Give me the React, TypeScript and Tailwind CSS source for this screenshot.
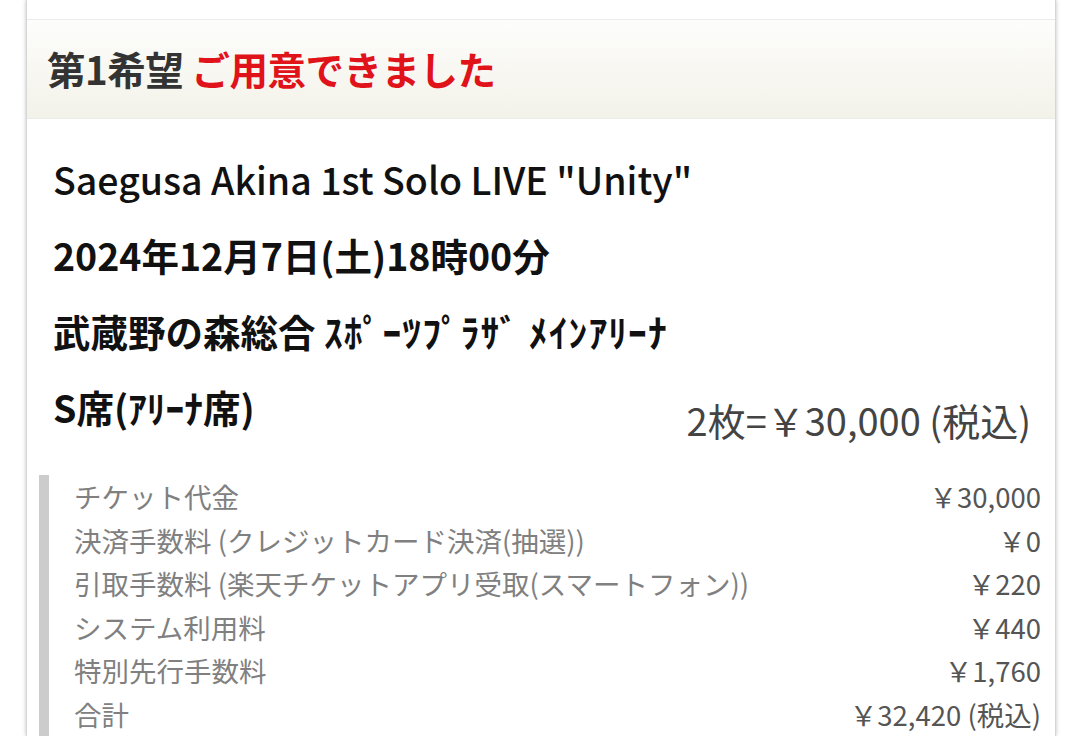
const fees = [
  { label: 'チケット代金', value: '￥30,000' },
  { label: '決済手数料 (クレジットカード決済(抽選))', value: '￥0' },
  { label: '引取手数料 (楽天チケットアプリ受取(スマートフォン))', value: '￥220' },
  { label: 'システム利用料', value: '￥440' },
  { label: '特別先行手数料', value: '￥1,760' },
  { label: '合計', value: '￥32,420 (税込)' },
];

export default function App() {
  return (
    <div
      className="h-[736px] overflow-hidden bg-white"
      style={{ fontFamily: '"Noto Sans CJK JP", "Noto Sans", sans-serif' }}
    >
      <div className="ml-[26px] w-[1030px] h-full bg-white border-x border-[#d6d6d6] shadow-[0_0_4px_rgba(0,0,0,0.25)]">
        <div className="h-[19px]" />
        {/* status header */}
        <div className="h-[100px] flex items-center pl-[20px] border-y border-[#ebebeb] bg-gradient-to-b from-[#fdfdfc] to-[#f3f2e9]">
          <h2 className="text-[38.5px] font-bold text-[#333] tracking-[-0.5px]">
            第1希望 <span className="text-[#e0121a]">ご用意できました</span>
          </h2>
        </div>

        {/* performance info */}
        <div className="pt-[22px] pl-[26px] pr-[24px] text-[#111] text-[37.5px] leading-[76px]">
          <p className="font-medium">Saegusa Akina 1st Solo LIVE "Unity"</p>
          <p className="font-bold">2024年12月7日(土)18時00分</p>
          <p className="font-bold">
            武蔵野の森総合 <span className="tracking-[1.1px]">ｽﾎﾟｰﾂﾌﾟﾗｻﾞ ﾒｲﾝｱﾘｰﾅ</span>
          </p>
          <div className="flex justify-between">
            <p className="font-bold">S席(ｱﾘｰﾅ席)</p>
            <p className="mt-[13px] text-[38px] text-[#444]">2枚=￥30,000 (税込)</p>
          </div>
        </div>

        {/* fee breakdown */}
        <div className="mt-[17px] ml-[12px] mr-[14px] border-l-[10px] border-[#cccccc] pl-[25px]">
          {fees.map((f) => (
            <div key={f.label} className="flex justify-between text-[27.5px] leading-[43.6px]">
              <span className="text-[#808080]">{f.label}</span>
              <span className="text-[#555]">{f.value}</span>
            </div>
          ))}
        </div>
      </div>
    </div>
  );
}
